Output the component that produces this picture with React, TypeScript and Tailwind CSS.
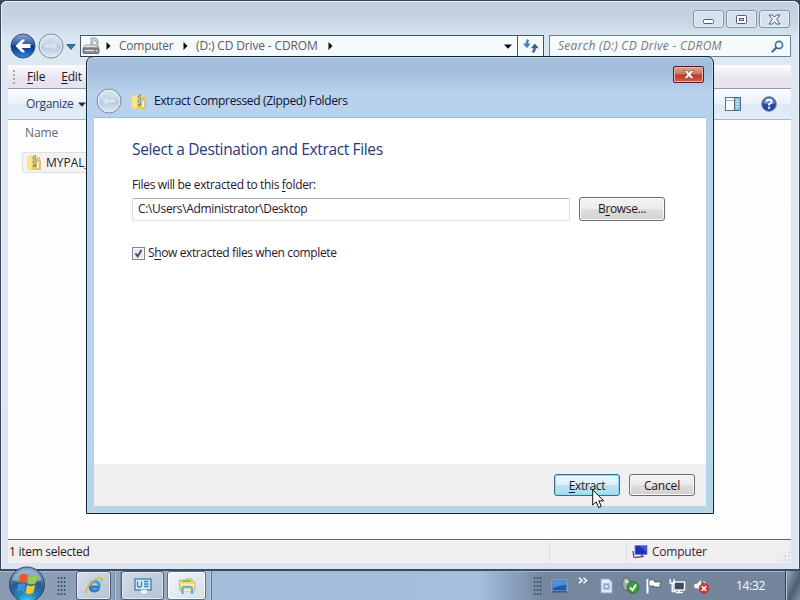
import React from 'react';

type IconProps = { className?: string };

function ZipFolder({ className = '' }: IconProps) {
  return (
    <svg className={className} width="16" height="17" viewBox="0 0 16 17">
      <path d="M1 3 L6 1 L7 3 L14 3 L15 16 L2 16 Z" fill="#e9cc66" />
      <path d="M1 3 L6 2 L6 16 L1 15 Z" fill="#f8e48f" />
      <path d="M10 5 L15 6 L15 16 L10 16 Z" fill="#d9c27c" />
      <rect x="7" y="1" width="3" height="12" fill="#8b8d78" />
      <path d="M7 2h2M8 4h2M7 6h2M8 8h2M7 10h2" stroke="#eef0e0" strokeWidth="1" />
      <rect x="11" y="8" width="2" height="6" fill="#f7efc8" />
    </svg>
  );
}

function BackOrb() {
  return (
    <svg width="26" height="26" viewBox="0 0 26 26">
      <defs>
        <linearGradient id="orb" x1="0" y1="0" x2="0" y2="1">
          <stop offset="0" stopColor="#8ba7d6" />
          <stop offset="0.45" stopColor="#2f58ab" />
          <stop offset="0.5" stopColor="#0c2f86" />
          <stop offset="1" stopColor="#2e8ee0" />
        </linearGradient>
      </defs>
      <circle cx="13" cy="13" r="12" fill="url(#orb)" stroke="#3b4a72" />
      <path d="M5.5 13 L12 6.5 L14.5 6.5 L14.5 8 L11.5 11 L20.5 11 L20.5 15 L11.5 15 L14.5 18 L14.5 19.5 L12 19.5 Z" fill="#fff" />
    </svg>
  );
}

function PaleOrb({ flip = false, id }: { flip?: boolean; id: string }) {
  return (
    <svg width="26" height="26" viewBox="0 0 26 26" className={flip ? '-scale-x-100' : ''}>
      <defs>
        <linearGradient id={id} x1="0" y1="0" x2="0" y2="1">
          <stop offset="0" stopColor="#dbe7f3" />
          <stop offset="0.48" stopColor="#c6d6e6" />
          <stop offset="0.52" stopColor="#b6c9dc" />
          <stop offset="1" stopColor="#dcedf8" />
        </linearGradient>
      </defs>
      <circle cx="13" cy="13" r="12" fill={`url(#${id})`} stroke="#7a8799" />
      <circle cx="13" cy="13" r="10.8" fill="none" stroke="#e9f2fa" strokeOpacity="0.8" />
      <path d="M6 13 L12 7.5 L12 11 L20 11 L20 15 L12 15 L12 18.5 Z" fill="#d8e5f1" stroke="#b4c6d8" strokeWidth="0.6" />
    </svg>
  );
}

function DriveIcon() {
  return (
    <svg width="18" height="18" viewBox="0 0 18 18">
      <path d="M9 1 L14 1 L16 4 L16 11 L9 11 Z" fill="#d4d7da" stroke="#8b8f94" strokeWidth="0.8" />
      <circle cx="12.5" cy="6" r="2.2" fill="#f8f8f8" stroke="#9a9da1" strokeWidth="0.8" />
      <path d="M3 8 L14 8 L17 11 L1 11 Z" fill="#dfe1e3" stroke="#85888c" strokeWidth="0.7" />
      <rect x="1" y="11" width="16" height="5.5" rx="0.8" fill="#85898d" stroke="#5c6064" strokeWidth="0.8" />
      <path d="M3 13.5h9" stroke="#e0e3e6" strokeWidth="1.2" />
      <rect x="14" y="13" width="1.5" height="1.5" fill="#b9f0a8" />
    </svg>
  );
}

function RightTri() {
  return (
    <svg width="5" height="8" viewBox="0 0 5 8">
      <path d="M0.5 0 L4.5 4 L0.5 8 Z" fill="#0a0a12" />
    </svg>
  );
}

function DownTri({ className = 'text-[#0a0a20]' }: IconProps) {
  return (
    <svg className={className} width="8" height="5" viewBox="0 0 8 5">
      <path d="M0 0.5 L8 0.5 L4 4.8 Z" fill="currentColor" />
    </svg>
  );
}

function Refresh() {
  return (
    <svg width="16" height="14" viewBox="0 0 16 14">
      <path d="M5.5 0.8 Q3.8 2 3.8 5" fill="none" stroke="#4f83b8" strokeWidth="2.4" />
      <path d="M0 4.5 L7.8 4.5 L4 9.2 Z" fill="#4f83b8" />
      <path d="M9.5 13.2 Q11.8 12 11.8 8.5" fill="none" stroke="#3c6390" strokeWidth="2.4" />
      <path d="M7.8 9.2 L15.8 9.2 L11.8 4.6 Z" fill="#3c6390" />
    </svg>
  );
}

function CaptionButton({ kind }: { kind: 'min' | 'max' | 'close' }) {
  return (
    <div className="flex h-[18px] w-[31px] items-center justify-center rounded-[3px] border border-[#8394a9] bg-[#d5e1ec] shadow-[inset_0_0_0_1px_#e8f0f7]">
      <svg width="13" height="11" viewBox="0 0 13 11">
        {kind === 'min' && <rect x="1.5" y="5.5" width="10" height="4" rx="1" fill="#fdfdfe" stroke="#505c70" />}
        {kind === 'max' && (
          <>
            <rect x="1.5" y="1.5" width="10" height="8" rx="1" fill="#fdfdfe" stroke="#505c70" />
            <rect x="4.5" y="4.5" width="4" height="2" fill="#ccd8e4" stroke="#505c70" />
          </>
        )}
        {kind === 'close' && (
          <path
            d="M1 1 L4.5 1 L6.5 3.2 L8.5 1 L12 1 L8.6 5.4 L12 10 L8.5 10 L6.5 7.6 L4.5 10 L1 10 L4.4 5.4 Z"
            fill="#fdfdfe"
            stroke="#505c70"
          />
        )}
      </svg>
    </div>
  );
}

function NavigationBar() {
  return (
    <div className="flex h-[27px] items-start pl-[6px] *:shrink-0">
      <div className="mt-[-3px] flex h-[27px] w-[55px] items-center gap-[2px]">
        <BackOrb />
        <PaleOrb id="forward" flip />
      </div>
      <div className="flex h-[21px] w-[15px] items-center pl-[1px] pt-[2px]">
        <svg width="10" height="6" viewBox="0 0 10 6">
          <path d="M0.8 0.6 L9.2 0.6 L5 5.4 Z" fill="#2f7dab" stroke="#22496d" strokeWidth="0.8" />
        </svg>
      </div>
      <div className="flex h-[22px] w-[464px] border border-[#48536b] border-b-[#3c3448] bg-[#f5fafd] text-[#5b5b62]">
        <div className="flex flex-1 items-center *:shrink-0">
          <span className="w-[25px] pl-[1px]">
            <DriveIcon />
          </span>
          <RightTri />
          <span className="w-[72px] pl-[8px] tracking-[-0.25px]">Computer</span>
          <RightTri />
          <span className="w-[140px] pl-[8px] tracking-[-0.15px]">(D:) CD Drive - CDROM</span>
          <RightTri />
          <span className="ml-auto mr-[5px] flex">
            <DownTri />
          </span>
        </div>
        <div className="flex w-[26px] items-center justify-center border-l border-[#48536b]">
          <Refresh />
        </div>
      </div>
      <div className="ml-[5px] flex h-[22px] w-[242px] items-center border border-[#6d7f94] bg-[#f5fafd] pl-[8px] pr-[6px] text-[#77777c]">
        <span className="italic tracking-[0.28px]">Search (D:) CD Drive - CDROM</span>
        <svg className="ml-auto" width="13" height="13" viewBox="0 0 13 13">
          <path d="M5.5 7.5 L1.5 11.5" stroke="#33709c" strokeWidth="2.2" strokeLinecap="round" />
          <circle cx="8" cy="5" r="3.6" fill="#eef8fd" stroke="#33709c" strokeWidth="1.6" />
        </svg>
      </div>
    </div>
  );
}

function ExplorerWindow() {
  return (
    <div className="flex h-[569px] w-[800px] flex-col rounded-t-[7px] border-x border-t border-[#3a4456] bg-[#dbe6f0]">
      <div className="flex flex-1 flex-col rounded-t-[6px] border border-b-0 border-[#e8f3fa] bg-[linear-gradient(180deg,#c3cede_0px,#c7d4e2_18px,#d8e7f2_36px,#dde8f2_64px,#dbe5f2_100%)] pl-[6px] pr-[7px]">
        <div className="flex h-[33px] shrink-0 justify-end gap-[2px] pr-[1px] pt-[8px]">
          <CaptionButton kind="min" />
          <CaptionButton kind="max" />
          <CaptionButton kind="close" />
        </div>
        <div className="-ml-[7px] h-[30px] shrink-0 pl-[3px]">
          <NavigationBar />
        </div>
        <div className="flex h-[24px] shrink-0 items-center border-b border-[#8f9cae] bg-[linear-gradient(180deg,#fdfcfe,#e9e5f0_55%,#e5e3ef)] text-[#17172a]">
          <div className="ml-[4px] h-[15px] w-[4px] bg-[radial-gradient(circle,#a5abba_1px,transparent_1px)] bg-[length:4px_4px]" />
          <span className="ml-[11px] tracking-[-0.2px]">
            <u className="underline-offset-2">F</u>ile
          </span>
          <span className="ml-[16px] tracking-[-0.2px]">
            <u className="underline-offset-2">E</u>dit
          </span>
        </div>
        <div className="flex h-[31px] shrink-0 items-center border-b border-[#a9b6c8] bg-[linear-gradient(180deg,#fbfdff,#e9f1fa_50%,#dce8f5_52%,#e4eef8)] pl-[18px] text-[#2b3f66]">
          <span>Organize</span>
          <span className="ml-[5px] flex">
            <DownTri className="text-[#1f2d49]" />
          </span>
          <svg className="ml-auto mr-[20px]" width="16" height="14" viewBox="0 0 16 14">
            <rect x="0.5" y="0.5" width="15" height="13" fill="#f8fcfe" stroke="#51708e" />
            <path d="M1 3.5h9" stroke="#9db2c5" />
            <rect x="10" y="1" width="5" height="12" fill="#87c2dc" />
            <path d="M9.5 1v12" stroke="#51708e" />
            <path d="M11 4h3M11 7h3M11 10h3" stroke="#dff3fa" />
          </svg>
          <svg className="mr-[14px]" width="16" height="16" viewBox="0 0 16 16">
            <circle cx="8" cy="8" r="7.3" fill="#27489b" stroke="#6f81a8" />
            <path d="M2 7.5 A6 6 0 0 1 14 7.5 Q8 9 2 7.5" fill="#6688c8" />
            <path d="M5.5 6 Q5.5 3.8 8 3.8 Q10.6 3.8 10.6 6 Q10.6 7.3 8.1 8.2 L8.1 9.6" fill="none" stroke="#fff" strokeWidth="1.9" />
            <rect x="7.1" y="10.8" width="2" height="2" fill="#fff" />
          </svg>
        </div>
        <div className="h-[419px] shrink-0 bg-[#fdfdfe]">
          <div className="h-[32px] pl-[17px] pt-[4px] leading-[18px] tracking-[-0.1px] text-[#65656e]">Name</div>
          <div className="ml-[14px] flex h-[21px] w-[300px] items-center rounded-[3px] border border-[#e0dfe0] bg-[#f4f3f3] pl-[3px] text-[#24242a]">
            <ZipFolder />
            <span className="ml-[4px] tracking-normal">MYPAL_52</span>
          </div>
        </div>
        <div className="flex h-[24px] shrink-0 items-center border-t border-[#5f6673] bg-[#f0eeef] text-[#241c26]">
          <span className="w-[541px] pl-[1px] tracking-[-0.27px]">1 item selected</span>
          <span className="h-[18px] w-[78px] border-x border-[#dcdadd]" />
          <svg className="ml-[5px]" width="16" height="14" viewBox="0 0 16 14">
            <rect x="3" y="0.5" width="12" height="9" fill="#2031b8" stroke="#7d8bc4" strokeWidth="0.8" />
            <path d="M8 1 L14.6 1 L14.6 7 Z" fill="#3b59e0" />
            <path d="M1 6 L2 13M3 12.5 L11 11.5 L9 9" stroke="#574c8e" strokeWidth="1.4" fill="none" />
          </svg>
          <span className="ml-[4px] tracking-[-0.22px] text-[#3a2440]">Computer</span>
          <svg className="ml-auto mt-[8px]" width="12" height="12" viewBox="0 0 12 12">
            <path d="M9 1h2v2h-2zM9 5h2v2h-2zM9 9h2v2h-2zM5 5h2v2h-2zM5 9h2v2h-2zM1 9h2v2h-2z" fill="#d5d5dc" />
          </svg>
        </div>
      </div>
    </div>
  );
}

function ExtractDialog() {
  return (
    <div className="absolute left-[86px] top-[56px] flex h-[458px] w-[628px] flex-col rounded-t-[7px] border border-[#10202c] bg-[linear-gradient(180deg,#a5bedb_0px,#a3bdda_14px,#b8d2ee_36px,#b9d3ee_260px,#b5d5e9_100%)] px-[7px] pb-[7px] shadow-[inset_0_0_0_1px_#bcdcf0]">
      <div className="flex h-[27px] shrink-0 justify-end pr-[2px] pt-[9px]">
        <div className="flex h-[17px] w-[31px] items-center justify-center rounded-[2px] border border-[#511c29] bg-[linear-gradient(180deg,#e5a094,#d2705f_48%,#bb3523_52%,#cf6546)] shadow-[inset_0_0_0_1px_#eeb5a2]">
          <svg width="12" height="9" viewBox="0 0 12 9">
            <path d="M1 0.5 L4 0.5 L6 2.5 L8 0.5 L11 0.5 L7.8 4.4 L11 8.5 L8 8.5 L6 6.4 L4 8.5 L1 8.5 L4.2 4.4 Z" fill="#fff" stroke="#7c3d3d" strokeWidth="0.6" />
          </svg>
        </div>
      </div>
      <div className="flex h-[34px] shrink-0 items-center pl-[2px] text-[#0b1330]">
        <PaleOrb id="dialogBack" />
        <ZipFolder className="ml-[9px]" />
        <span className="ml-[7px]">Extract Compressed (Zipped) Folders</span>
      </div>
      <div className="h-[346px] bg-white pl-[38px] pt-[19px] text-[#2b1430] shadow-[0_-1px_0_#9bbccb]">
        <h1 className="text-[15.5px] leading-[24px] tracking-[-0.36px] text-[#1f3a78]">Select a Destination and Extract Files</h1>
        <div className="mt-[15px] leading-[18px]">
          Files will be extracted to this <u className="underline-offset-2">f</u>older:
        </div>
        <div className="mt-[3px] flex items-center gap-[9px]">
          <div className="flex h-[23px] w-[438px] items-center rounded-[2px] border border-[#dcdde2] border-t-[#a9abb3] pl-[5px]">
            C:\Users\Administrator\Desktop
          </div>
          <button className="h-[24px] w-[86px] rounded-[3px] border border-[#6c6c6e] bg-[linear-gradient(180deg,#f3f3f3,#ececec_48%,#dedede_52%,#d0d0d0)] text-[#1c1620] shadow-[inset_0_0_0_1px_#fafafa]">
            B<u className="underline-offset-2">r</u>owse...
          </button>
        </div>
        <label className="mt-[23px] flex h-[18px] items-center">
          <span className="flex h-[13px] w-[13px] items-center justify-center border border-[#83868b] bg-[#e6e9ec] shadow-[inset_0_0_0_1px_#f7f8f8]">
            <svg width="9" height="9" viewBox="0 0 9 9">
              <path d="M1.5 4.5 L3.7 7.3 L7.5 1" stroke="#3e4668" strokeWidth="1.8" fill="none" />
            </svg>
          </span>
          <span className="ml-[3px] tracking-[-0.38px]">
            S<u className="underline-offset-2">h</u>ow extracted files when complete
          </span>
        </label>
      </div>
      <div className="flex h-[42px] items-center justify-end gap-[9px] bg-[#f0eff0] pr-[11px] text-[#1c1620]">
        <button className="h-[22px] w-[66px] rounded-[3px] border border-[#34718f] bg-[linear-gradient(180deg,#eef8fc,#dcf0f9_48%,#bfe2f3_52%,#add9ef)] pt-[1px] shadow-[inset_0_0_0_1px_#7fdcf6]">
          <u className="underline-offset-2">E</u>xtract
        </button>
        <button className="h-[22px] w-[66px] rounded-[3px] border border-[#6c6c6e] bg-[linear-gradient(180deg,#f3f3f3,#ececec_48%,#dedede_52%,#d0d0d0)] pt-[1px] tracking-[-0.15px] shadow-[inset_0_0_0_1px_#fafafa]">
          Cancel
        </button>
      </div>
    </div>
  );
}

function StartOrb() {
  return (
    <svg className="absolute left-[8px] top-[-5px]" width="38" height="36" viewBox="0 0 38 36">
      <defs>
        <radialGradient id="start" cx="0.5" cy="1" r="1">
          <stop offset="0" stopColor="#45d6fb" />
          <stop offset="0.3" stopColor="#2283bd" />
          <stop offset="0.6" stopColor="#2c5a87" />
          <stop offset="1" stopColor="#8aa8c6" />
        </radialGradient>
      </defs>
      <circle cx="19" cy="18.5" r="17.5" fill="url(#start)" stroke="#2c4663" />
      <path d="M4 14 A16 16 0 0 1 34 14 Q19 20 4 14" fill="#c7d8e8" opacity="0.5" />
      <path d="M12 9 Q16 6.5 20 9.2 L18.2 17 Q14.5 14.8 10.5 17 Z" fill="#ea5a20" />
      <path d="M21.3 9.8 Q25 12 29.5 9.8 L27.5 17.6 Q23.5 19.6 19.5 17.6 Z" fill="#9ccc40" />
      <path d="M10.2 18.4 Q14 16 17.9 18.4 L16 26 Q12.2 23.8 8.4 26 Z" fill="#3c8fdc" />
      <path d="M19.2 19 Q23 21.3 27.2 19 L25.2 27 Q21.3 29.2 17.3 27 Z" fill="#fbc72e" />
    </svg>
  );
}

function Gripper() {
  return <div className="h-[20px] w-[9px] bg-[radial-gradient(circle,#3f5066_0.9px,transparent_1.2px)] bg-[length:3px_4px]" />;
}

function Taskbar() {
  return (
    <div className="relative flex h-[31px] w-[800px] items-center border-t-2 border-[#3c4a66] bg-[linear-gradient(90deg,#8a9ab3_0px,#93a4be_150px,#a5bddb_215px,#a5bfdd_480px,#8ca3c1_510px,#74879f_545px,#72859b_800px)] shadow-[inset_0_1px_0_#a7b7ca]">
      <StartOrb />
      <div className="ml-[57px]">
        <Gripper />
      </div>
      <div className="ml-[10px] flex h-[29px] w-[35px] items-center justify-center rounded-[3px] border border-[#4c5c73] bg-[linear-gradient(135deg,#d6dfe9,#b4c2d3)] shadow-[inset_0_0_0_1px_#dfe8f0]">
        <svg width="20" height="20" viewBox="0 0 20 20">
          <path d="M16 11 L6 11 Q6.5 15 10.5 15 Q13 15 15 13" fill="none" stroke="#2a80c8" strokeWidth="2.8" />
          <path d="M6 10.5 Q6.5 5.5 11 5.5 Q15 5.5 15.5 10.5" fill="none" stroke="#3b9ad9" strokeWidth="2.8" />
          <path d="M3 17 Q0 15 6 8 Q13 1 17.5 2.5 Q19 3.5 17 6" fill="none" stroke="#e2b92e" strokeWidth="1.7" />
        </svg>
      </div>
      <div className="ml-[3px] h-[29px] w-[7px] border-x border-[#748aa5] shadow-[inset_1px_0_0_#b8c8d9]" />
      <div className="flex h-[29px] w-[43px] items-center justify-center rounded-[3px] border border-[#4c5c73] bg-[linear-gradient(135deg,#d3dde8,#b2c1d4)] shadow-[inset_0_0_0_1px_#dfe8f0]">
        <svg width="18" height="18" viewBox="0 0 18 18">
          <rect x="1" y="2" width="16" height="11" fill="#d4eaf5" stroke="#447da5" strokeWidth="1.3" />
          <path d="M3.5 4.5 v3.5 q0 2 2 2 q2 0 2-2 v-3.5 M10 4.5h4.5M10 7h4.5M10 9.5h4.5" stroke="#3685b5" strokeWidth="1.3" fill="none" />
          <ellipse cx="10" cy="15" rx="4" ry="2.4" fill="#f3f8fb" stroke="#8fa9bb" strokeWidth="0.7" />
        </svg>
      </div>
      <div className="ml-[3px] flex h-[29px] w-[39px] items-center justify-center rounded-[3px] border border-[#5e7189] bg-[linear-gradient(135deg,#f0f5fa,#d3dfea)] shadow-[inset_0_0_0_1px_#fff]">
        <svg width="18" height="18" viewBox="0 0 18 18">
          <path d="M1 3 L7 3 L8.5 1.5 L14 2 L15 5 L17 5 L17 14 L2 14 Z" fill="#f0dc7a" stroke="#c7a83e" strokeWidth="0.7" />
          <path d="M4 4h9" stroke="#66bd68" strokeWidth="1.6" />
          <path d="M3 7h13v7H3z" fill="#fbefaf" />
          <path d="M4.5 17 L4.5 11.5 Q4.5 10 6.5 10 L12 10 Q14 10 14 11.5 L14 17" fill="none" stroke="#65afd8" strokeWidth="2.4" />
        </svg>
      </div>
      <div className="ml-[1px] h-[29px] w-[5px] border-r border-[#60748d] shadow-[inset_-1px_0_0_#b9c9dc]" />

      <div className="ml-auto flex items-center">
        <Gripper />
        <svg className="ml-[9px]" width="17" height="14" viewBox="0 0 17 14">
          <rect x="1" y="1" width="15" height="11" fill="#2457a8" stroke="#9cb9d4" strokeWidth="0.9" />
          <path d="M2 2h13v4Q8 6 2 9z" fill="#4d91da" />
          <path d="M1 12.8h15" stroke="#2c3b4b" />
        </svg>
        <svg className="mb-[11px] ml-[10px]" width="10" height="7" viewBox="0 0 10 7">
          <path d="M1 0.8 L4 3.5 L1 6.2 M5.5 0.8 L8.5 3.5 L5.5 6.2" fill="none" stroke="#fff" strokeWidth="1.5" />
        </svg>
        <svg className="ml-[12px]" width="13" height="16" viewBox="0 0 13 16">
          <path d="M1 1h8l3 3v11H1z" fill="#e4eef7" stroke="#8daac6" />
          <path d="M9 1v3h3" fill="#b9cee2" />
          <path d="M3 5h7v7H3z" fill="#a4c3e0" />
          <circle cx="6.5" cy="8.5" r="2" fill="#e9f3fb" stroke="#5e89b5" strokeWidth="0.8" />
        </svg>
        <svg className="ml-[9px]" width="18" height="17" viewBox="0 0 18 17">
          <path d="M2 1h5v3h2v6l-3 3H2L0.5 9V5z" fill="#a5a9aa" stroke="#5c6266" strokeWidth="0.8" />
          <path d="M3 3h3v3H3z" fill="#dde0e0" />
          <circle cx="11" cy="10.5" r="5.8" fill="#35a139" stroke="#1e6d25" strokeWidth="0.8" />
          <path d="M8 10.5 L10.5 13.2 L14 7.5" fill="none" stroke="#fff" strokeWidth="1.8" />
        </svg>
        <svg className="ml-[5px]" width="18" height="16" viewBox="0 0 18 16">
          <path d="M2.5 1v14.5" stroke="#fff" strokeWidth="2" />
          <path d="M4 2 L9.5 2 L9.5 4 L16.5 4 L14.5 6.5 L16 9 L9 9 L9 8 L4 8 Z" fill="#fff" stroke="#33475c" strokeWidth="0.7" />
        </svg>
        <svg className="ml-[6px]" width="17" height="16" viewBox="0 0 17 16">
          <rect x="5" y="4" width="10.5" height="8" fill="#3b4b5e" stroke="#fff" strokeWidth="1.4" />
          <path d="M7 14.5h7M10 12v2" stroke="#fff" strokeWidth="1.5" />
          <path d="M1.2 1v4h4V1M3.2 5v8.5h4" fill="none" stroke="#fff" strokeWidth="1.3" />
        </svg>
        <svg className="ml-[7px]" width="18" height="16" viewBox="0 0 18 16">
          <path d="M1 5.5h3L8.5 1v13.5L4 10.5H1z" fill="#f6f8fa" stroke="#6d7986" strokeWidth="0.7" />
          <path d="M10.5 3 Q12 4 12 6" fill="none" stroke="#fff" />
          <circle cx="11" cy="10.5" r="5" fill="#d63a3a" stroke="#9f2525" strokeWidth="0.6" />
          <path d="M8.8 8.3 L13.2 12.7 M13.2 8.3 L8.8 12.7" stroke="#fff" strokeWidth="1.6" />
        </svg>
        <span className="ml-[25px] w-[29px] tracking-[-0.3px] text-white">14:32</span>
        <div className="ml-[20px] h-[29px] w-[15px] border-l border-[#344357] bg-[linear-gradient(115deg,#9dadbe,#66788e_40%,#4d5f75_60%,#7f90a4)] shadow-[inset_1px_0_0_#b4c2cf]" />
      </div>
    </div>
  );
}

function Cursor() {
  return (
    <svg className="absolute left-[592px] top-[489px]" width="13" height="20" viewBox="0 0 13 20">
      <path d="M0.7 0.9 L0.7 16 L4.2 12.8 L6.7 18.6 L9.3 17.4 L6.8 11.8 L11.7 11.8 Z" fill="#fff" stroke="#111" strokeWidth="1" />
    </svg>
  );
}

export default function App() {
  return (
    <div className="relative h-[600px] w-[800px] cursor-default overflow-hidden whitespace-nowrap bg-[#3c4859] font-['Open_Sans','Noto_Sans',sans-serif] text-[12px] leading-[16px] tracking-[-0.34px]">
      <ExplorerWindow />
      <Taskbar />
      <ExtractDialog />
      <Cursor />
    </div>
  );
}
